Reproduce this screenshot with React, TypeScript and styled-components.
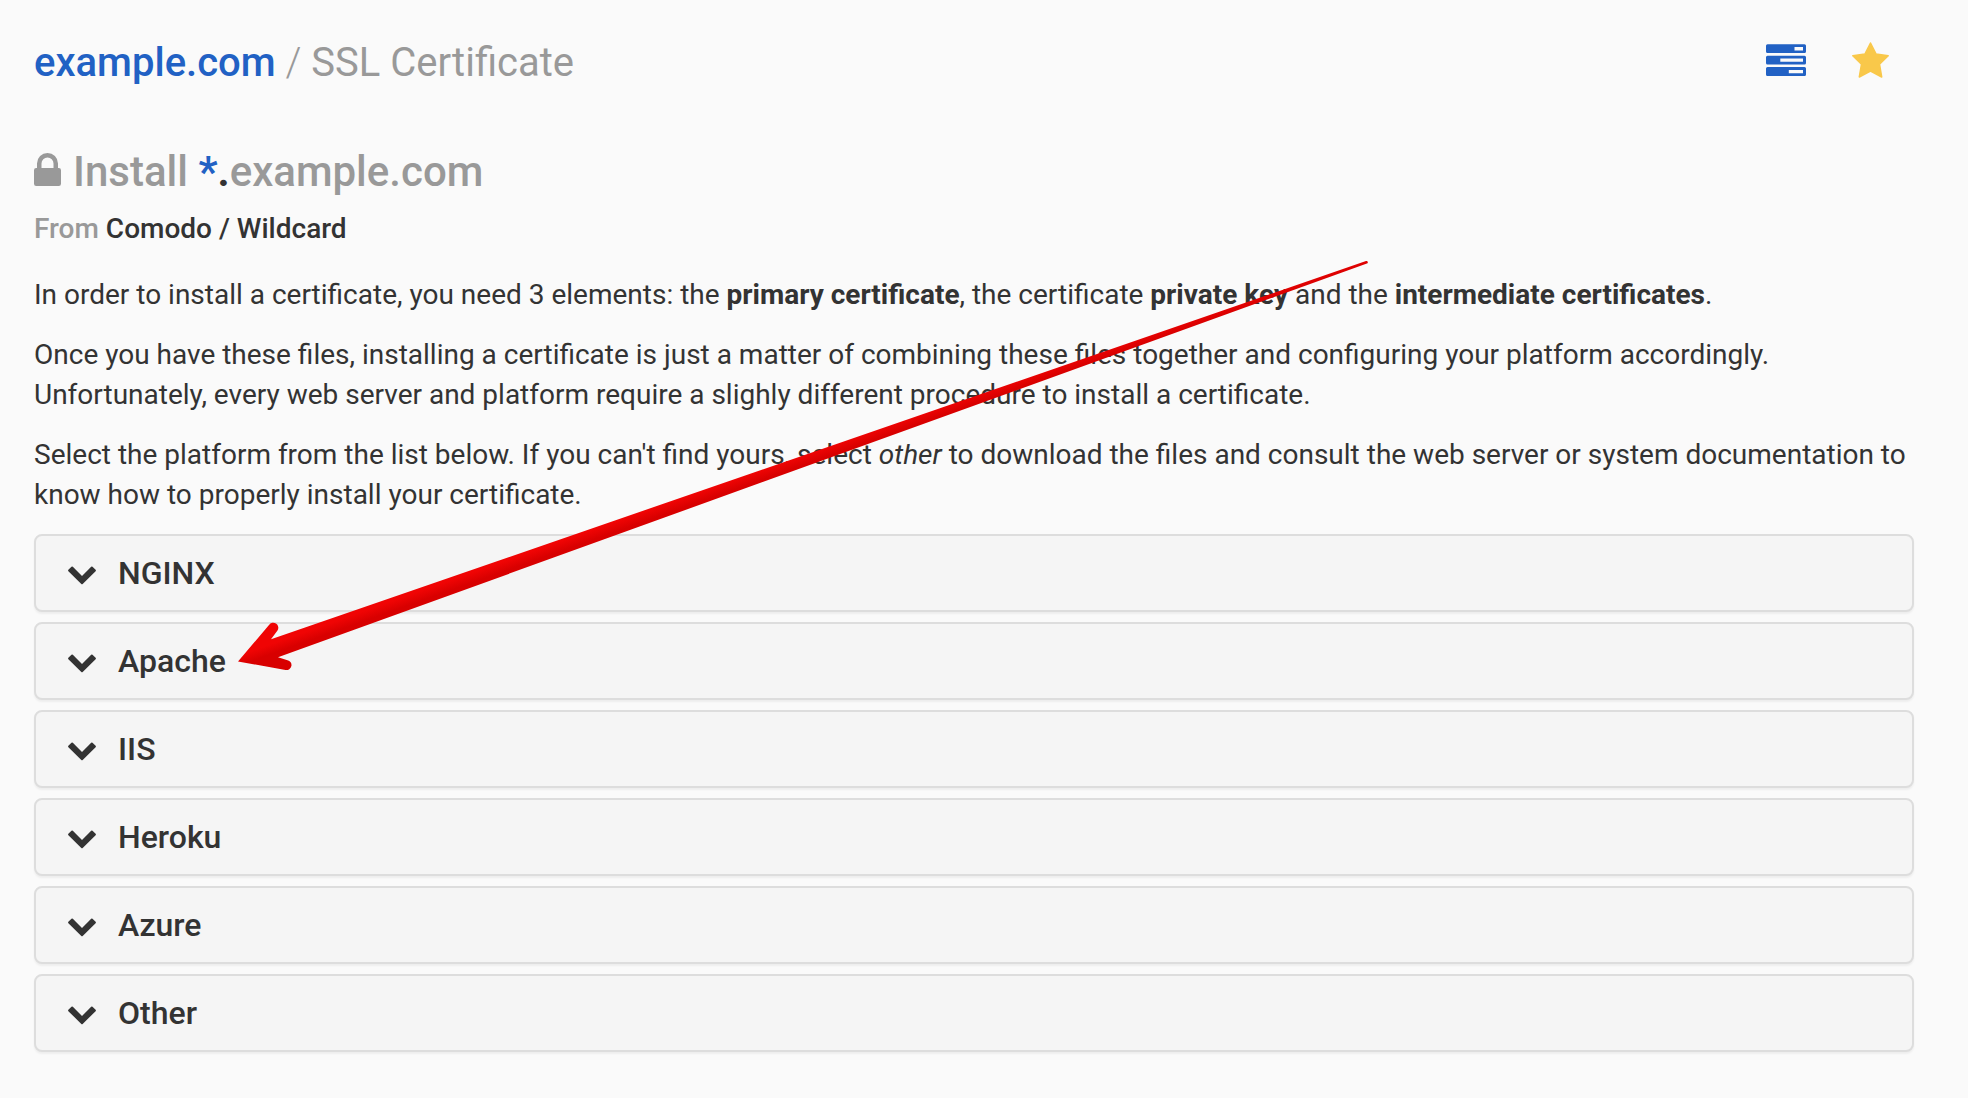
import React from "react";
import styled, { createGlobalStyle } from "styled-components";

const color = {
  page: "#fafafa",
  panel: "#f5f5f5",
  border: "#dddddd",
  text: "#333333",
  muted: "#999999",
  link: "#2161c4",
  star: "#f9c84a",
};

const GlobalStyle = createGlobalStyle`
  *, *::before, *::after { box-sizing: border-box; }
  body {
    margin: 0;
    background: ${color.page};
    color: ${color.text};
    font-family: Roboto, "Liberation Sans", sans-serif;
    font-size: 28px;
    line-height: 40px;
  }
`;

const Page = styled.div`
  position: relative;
  padding: 37px 54px 46px 34px;
`;

const Header = styled.header`
  display: flex;
  align-items: center;
  justify-content: space-between;
  height: 52px;
  margin-bottom: 55px;
  padding-right: 25px;
`;

const Breadcrumb = styled.h1`
  margin: 0;
  font-size: 40px;
  line-height: 52px;
  font-weight: 400;
  color: ${color.muted};
`;

const DomainLink = styled.a`
  color: ${color.link};
  font-weight: 500;
  text-decoration: none;
`;

const Separator = styled.span`
  font-weight: 300;
`;

const Actions = styled.div`
  display: flex;
  align-items: center;
  gap: 46px;
  padding-bottom: 6px;
`;

const IconButton = styled.button<{ $color: string }>`
  display: flex;
  padding: 0;
  border: 0;
  background: none;
  color: ${(p) => p.$color};
  cursor: pointer;
`;

const Title = styled.h2`
  display: flex;
  align-items: center;
  gap: 12px;
  margin: 0 0 9px;
  font-size: 42px;
  line-height: 56px;
  font-weight: 500;
  color: ${color.muted};
`;

const Lock = styled.svg`
  margin-bottom: 5px;
`;

const Wildcard = styled.span`
  color: ${color.link};
  font-weight: 700;
`;

const Dot = styled.span`
  color: ${color.text};
  font-weight: 700;
`;

const Issuer = styled.h3`
  margin: 0 0 26px;
  font-size: 28px;
  line-height: 40px;
  font-weight: 500;
  color: ${color.muted};
`;

const IssuerName = styled.span`
  color: ${color.text};
`;

const Intro = styled.section`
  display: flex;
  flex-direction: column;
  gap: 20px;
  margin-bottom: 19px;
`;

const Paragraph = styled.p`
  margin: 0;
`;

const PlatformList = styled.ul`
  display: flex;
  flex-direction: column;
  gap: 10px;
  margin: 0;
  padding: 0;
  list-style: none;
`;

const PlatformButton = styled.button`
  display: flex;
  align-items: center;
  gap: 22px;
  width: 100%;
  height: 78px;
  padding: 0 32px;
  border: 2px solid ${color.border};
  border-radius: 8px;
  background: ${color.panel};
  box-shadow: 0 2px 2px rgba(0, 0, 0, 0.05);
  color: ${color.text};
  font: 500 32px/40px Roboto, "Liberation Sans", sans-serif;
  text-align: left;
  cursor: pointer;
`;

const Chevron = styled.svg`
  margin-top: 4px;
`;

const Arrow = styled.svg`
  position: absolute;
  left: 238px;
  top: 260px;
  pointer-events: none;
`;

const TasksIcon = () => (
  <svg width="40" height="32" viewBox="0 0 40 32" fill="currentColor" aria-hidden="true">
    <path
      fillRule="evenodd"
      d="M1.500 0.300h37a1.500 1.500 0 0 1 1.500 1.500v5.700a1.500 1.500 0 0 1-1.500 1.500h-37a1.500 1.500 0 0 1-1.500-1.500v-5.700a1.500 1.500 0 0 1 1.500-1.500zM28.500 3v3.500h8.500V3zM1.500 11.700h37a1.500 1.500 0 0 1 1.500 1.500v5.800a1.500 1.500 0 0 1-1.500 1.500h-37a1.500 1.500 0 0 1-1.500-1.500v-5.800a1.500 1.500 0 0 1 1.500-1.500zM14.300 14.500v3.300h22.700v-3.300zM1.500 23h37a1.500 1.500 0 0 1 1.500 1.500v6a1.500 1.500 0 0 1-1.500 1.500h-37a1.500 1.500 0 0 1-1.500-1.500v-6a1.500 1.500 0 0 1 1.500-1.500zM22.800 26v3.300h14.200V26z"
    />
  </svg>
);

const StarIcon = () => (
  <svg width="37" height="36" viewBox="0 0 37 36" fill="currentColor" aria-hidden="true">
    <path
      stroke="currentColor"
      strokeWidth="1.500"
      strokeLinejoin="round"
      d="M18.500 1L24.100 12L36.200 13.800L27.500 22.100L29.700 35L18.500 29.200L7.300 35L9.500 22.100L0.800 13.800L12.900 12z"
    />
  </svg>
);

const LockIcon = () => (
  <Lock width="27" height="33" viewBox="0 0 27 33" fill="currentColor" aria-hidden="true">
    <path
      fillRule="evenodd"
      d="M3 15V10.500a10.500 10.500 0 0 1 21 0V15h.800a2.200 2.200 0 0 1 2.200 2.200v13.600a2.200 2.200 0 0 1-2.200 2.200h-22.600a2.200 2.200 0 0 1-2.200-2.200v-13.600a2.200 2.200 0 0 1 2.200-2.200zM7.500 15h12v-4.500a6 6 0 0 0-12 0z"
    />
  </Lock>
);

const ChevronIcon = () => (
  <Chevron width="28" height="19" viewBox="0 0 29 19" fill="currentColor" aria-hidden="true">
    <path d="M15.200 18.200a1 1 0 0 1-1.400 0L.400 5a1 1 0 0 1 0-1.400L3.600.400a1 1 0 0 1 1.400 0l9.500 9.500L24 .400a1 1 0 0 1 1.400 0l3.200 3.200a1 1 0 0 1 0 1.400z" />
  </Chevron>
);

const platforms = ["NGINX", "Apache", "IIS", "Heroku", "Azure", "Other"];

export default function App() {
  return (
    <>
      <GlobalStyle />
      <Page>
        <Header>
          <Breadcrumb>
            <DomainLink href="#domain">example.com</DomainLink> <Separator>/</Separator> SSL Certificate
          </Breadcrumb>
          <Actions>
            <IconButton type="button" aria-label="Tasks" $color={color.link}>
              <TasksIcon />
            </IconButton>
            <IconButton type="button" aria-label="Favorite" $color={color.star}>
              <StarIcon />
            </IconButton>
          </Actions>
        </Header>
        <main>
          <Title>
            <LockIcon />
            <span>
              Install <Wildcard>*</Wildcard>
              <Dot>.</Dot>example.com
            </span>
          </Title>
          <Issuer>
            From <IssuerName>Comodo / Wildcard</IssuerName>
          </Issuer>
          <Intro>
            <Paragraph>
              In order to install a certificate, you need 3 elements: the <strong>primary certificate</strong>, the
              certificate <strong>private key</strong> and the <strong>intermediate certificates</strong>.
            </Paragraph>
            <Paragraph>
              Once you have these files, installing a certificate is just a matter of combining these files together
              and configuring your platform accordingly. Unfortunately, every web server and platform require a
              slighly different procedure to install a certificate.
            </Paragraph>
            <Paragraph>
              Select the platform from the list below. If you can't find yours, select <em>other</em> to download the
              files and consult the web server or system documentation to know how to properly install your
              certificate.
            </Paragraph>
          </Intro>
          <PlatformList>
            {platforms.map((name) => (
              <li key={name}>
                <PlatformButton type="button" aria-expanded="false">
                  <ChevronIcon />
                  {name}
                </PlatformButton>
              </li>
            ))}
          </PlatformList>
        </main>
        <Arrow width="1132" height="412" viewBox="238 260 1132 412" aria-hidden="true">
          <defs>
            <linearGradient id="shaft" gradientUnits="userSpaceOnUse" x1="271.100" y1="639" x2="277.500" y2="657">
              <stop offset="0.25" stopColor="#f00404" />
              <stop offset="0.75" stopColor="#d80000" />
            </linearGradient>
          </defs>
          <path
            fill="url(#shaft)"
            d="M238 661.500L269 625a5 5 0 0 1 8.500 5.500L271 639.300L1366 261a1.300 1.300 0 0 1 .900 2.500L278 657.300L287.500 660.200a5 5 0 0 1-2 9.800z"
          />
        </Arrow>
      </Page>
    </>
  );
}
